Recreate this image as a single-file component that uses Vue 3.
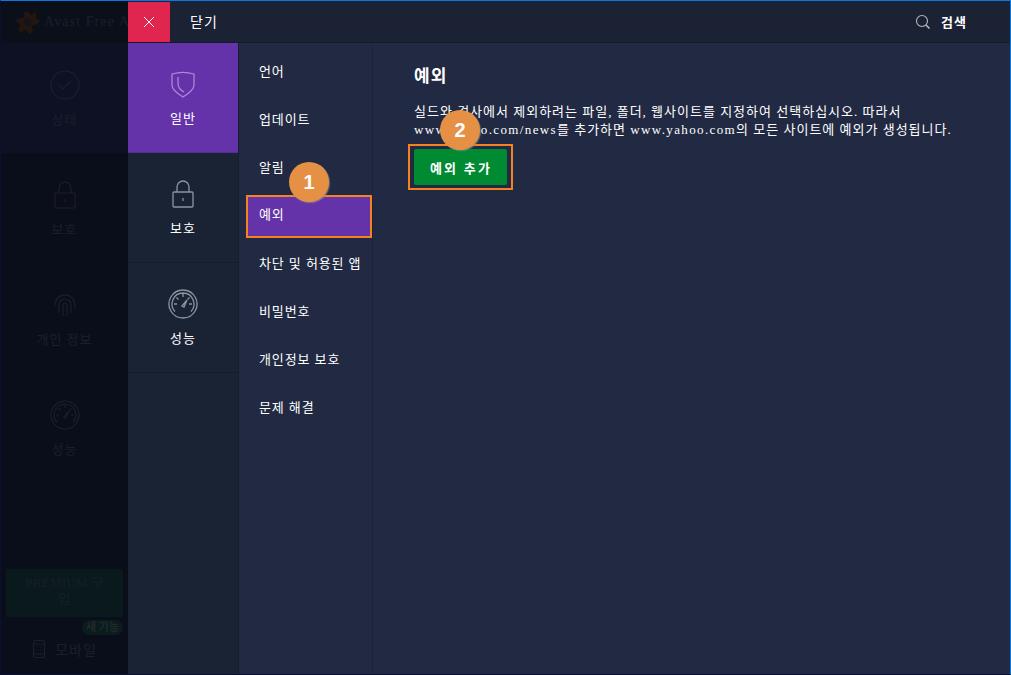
<template>
  <div class="window">
    <!-- dimmed app behind the settings panel -->
    <aside class="back">
      <div class="back-head">
        <svg class="logo" viewBox="0 0 24 24" width="26" height="26">
          <path d="M20 2l-1 6 4 3-2 3-6 1 2 5-4 3-3-4-5 3-2-3 2-5-4-2 1-3 6-1 0-5 4-1 3 4z" fill="#22160f" />
          <circle cx="11.500" cy="12" r="3.500" fill="#14121a" />
        </svg>
        <span class="back-title">Avast Free A</span>
      </div>
      <div v-for="item in backItems" :key="item.label" class="back-item" :class="{ on: item.on }">
        <svg viewBox="0 0 32 32" width="32" height="32" fill="none" stroke="#1c1f2b" stroke-width="1.2">
          <path v-for="d in item.paths" :key="d" :d="d" />
        </svg>
        <span>{{ item.label }}</span>
      </div>
      <div class="back-foot">
        <div class="premium">PREMIUM 구입</div>
        <span class="new-pill">새 기능</span>
        <div class="mobile">
          <svg viewBox="0 0 14 20" width="14" height="20" fill="none" stroke="#1c1f2b" stroke-width="1.2">
            <rect x="1.500" y="1.500" width="11" height="17" rx="2" />
            <path d="M2 5h10M2 15h10M5 8h1M8 8h1M5 11h1M8 11h1" />
          </svg>
          <span>모바일</span>
        </div>
      </div>
    </aside>

    <section class="panel">
      <header class="topbar">
        <button class="close">
          <svg viewBox="0 0 12 12" width="12" height="12" fill="none" stroke="#fff" stroke-width="1">
            <path d="M1 1l10 10M11 1L1 11" />
          </svg>
        </button>
        <span class="close-label">닫기</span>
        <div class="search">
          <svg viewBox="0 0 16 16" width="16" height="16" fill="none" stroke="#b4b8c2" stroke-width="1.1">
            <circle cx="7" cy="7" r="5.500" />
            <path d="M11 11l3.500 3.500" stroke-width="1.600" />
          </svg>
          <b>검색</b>
        </div>
      </header>

      <div class="body">
        <nav class="cats">
          <div v-for="c in cats" :key="c.label" class="cat" :class="{ active: c.active }">
            <svg viewBox="0 0 32 32" width="32" height="32" fill="none" :stroke="c.active ? '#a78ad4' : '#8d93a1'" stroke-width="1.300">
              <path v-for="d in c.paths" :key="d" :d="d" />
            </svg>
            <span>{{ c.label }}</span>
          </div>
        </nav>

        <ul class="subnav">
          <li v-for="s in subItems" :key="s" :class="{ selected: s === '예외' }">{{ s }}</li>
        </ul>

        <main class="content">
          <h2>예외</h2>
          <p>
            실드와 검사에서 제외하려는 파일, 폴더, 웹사이트를 지정하여 선택하십시오. 따라서<br />
            <span class="url">www.yahoo.com/news</span>를 추가하면 <span class="url">www.yahoo.com</span>의 모든 사이트에 예외가 생성됩니다.
          </p>
          <div class="add-box">
            <button class="add">예외 추가</button>
          </div>
        </main>
      </div>
    </section>

    <div class="marker one">1</div>
    <div class="marker two">2</div>
  </div>
</template>

<script setup>
const gauge = [
  'M16 2a14 14 0 1 0 .01 0z',
  'M16 5a11 11 0 0 0-8 18.500M16 5a11 11 0 0 1 8 18.500',
  'M15 18l5-6-3 7z',
  'M16 6v3M7 16h3M25 16h-3M9.500 9.500l2 2M22.500 9.500l-2 2'
]
const lock = [
  'M7 14h18a1 1 0 0 1 1 1v13a1 1 0 0 1-1 1H7a1 1 0 0 1-1-1V15a1 1 0 0 1 1-1z',
  'M10 14V9a6 6 0 0 1 12 0v5',
  'M16 20v3'
]
const shield = [
  'M5 6c7-2 15-2 22 0v11c0 5-6 9-11 12-5-3-11-7-11-12z',
  'M11 9v6c0 4 2 7 6 9'
]

const backItems = [
  { label: '상태', on: true, paths: ['M16 2a14 14 0 1 0 .01 0z', 'M10 16l4 4 8-8'] },
  { label: '보호', paths: lock },
  {
    label: '개인 정보',
    paths: [
      'M8 10a10 10 0 0 1 16 0',
      'M6 16a10 10 0 0 1 20 0v4',
      'M10 24v-8a6 6 0 0 1 12 0v8',
      'M14 27V16a2 2 0 0 1 4 0v11'
    ]
  },
  { label: '성능', paths: gauge }
]

const cats = [
  { label: '일반', active: true, paths: shield },
  { label: '보호', paths: lock },
  { label: '성능', paths: gauge }
]

const subItems = ['언어', '업데이트', '알림', '예외', '차단 및 허용된 앱', '비밀번호', '개인정보 보호', '문제 해결']
</script>

<style>
html,
body {
  margin: 0;
  background: #0b0f1d;
}
</style>

<style scoped>
.window {
  position: relative;
  box-sizing: border-box;
  display: flex;
  width: 1011px;
  height: 675px;
  overflow: hidden;
  border: 1px solid #0b1030;
  border-top: 1px solid #0a78e0;
  border-right-color: #0a78e0;
  font-family: "Liberation Serif", "Noto Sans CJK KR", serif;
  font-size: 13px;
  color: #fff;
}

/* dimmed background app */
.back {
  display: flex;
  flex-direction: column;
  flex: 0 0 127px;
  width: 127px;
  min-width: 0;
  overflow: hidden;
  background: #0a0e1b;
  color: #1c1f2b;
}
.back-head {
  display: flex;
  align-items: center;
  gap: 3px;
  height: 42px;
  padding-left: 14px;
  background: #0a0f1a;
  white-space: nowrap;
  font-size: 14px;
  letter-spacing: 1.100px;
}
.logo {
  flex: none;
}
.back-item {
  display: flex;
  flex-direction: column;
  align-items: center;
  gap: 8px;
  height: 110px;
  padding-top: 26px;
  box-sizing: border-box;
  letter-spacing: 1px;
}
.back-item.on {
  background: #0e1024;
}
.back-foot {
  position: relative;
  margin-top: auto;
  padding: 0 5px 15px;
}
.premium {
  box-sizing: border-box;
  height: 48px;
  padding: 6px 16px 0;
  background: #0a1a1c;
  color: #191e26;
  text-align: center;
  font-size: 13px;
  letter-spacing: 0.3px;
  line-height: 16px;
}
.new-pill {
  position: absolute;
  right: 5px;
  top: 51px;
  padding: 0 4px;
  border-radius: 8px;
  background: #0a1c1c;
  color: #202a2a;
  font-size: 11px;
  line-height: 15px;
  font-weight: 700;
}
.mobile {
  display: flex;
  justify-content: center;
  align-items: center;
  gap: 9px;
  margin-top: 22px;
  font-size: 14px;
  letter-spacing: 1px;
}

/* settings panel */
.panel {
  position: relative;
  display: flex;
  flex-direction: column;
  flex: 1;
  min-width: 0;
  background: #222a43;
}
.topbar {
  display: flex;
  align-items: center;
  height: 42px;
  padding-top: 1px;
  box-sizing: border-box;
  background: #1a2233;
  border-bottom: 1px solid #141b29;
}
.close {
  display: flex;
  justify-content: center;
  align-items: center;
  width: 42px;
  height: 40px;
  padding: 0;
  border: 0;
  background: #e0264f;
}
.close-label {
  margin-left: 20px;
  margin-top: -2px;
  font-size: 14px;
  letter-spacing: 1px;
}
.search {
  display: flex;
  align-items: center;
  gap: 10px;
  margin-left: auto;
  margin-right: 43px;
}
.search b {
  font-size: 13px;
  letter-spacing: 1px;
  margin-top: -2px;
}

.body {
  display: flex;
  flex: 1;
  min-height: 0;
}
.cats {
  flex: 0 0 110px;
  background: #1a2334;
  border-right: 1px solid #171e2e;
}
.cat {
  box-sizing: border-box;
  display: flex;
  flex-direction: column;
  align-items: center;
  gap: 8px;
  height: 110px;
  padding-top: 25px;
  border-bottom: 1px solid #151c2b;
  letter-spacing: 1px;
}
.cat.active {
  background: #6533a9;
  border-bottom-color: #52308f;
}

.subnav {
  flex: 0 0 134px;
  box-sizing: border-box;
  margin: 0;
  padding: 5px 0 0;
  list-style: none;
  border-right: 1px solid #1d2438;
}
.subnav li {
  box-sizing: border-box;
  height: 48px;
  padding-left: 20px;
  line-height: 48px;
  white-space: nowrap;
  letter-spacing: 0.9px;
}
.subnav li.selected {
  height: 43px;
  margin: 3px 0 2px 7px;
  padding-left: 11px;
  line-height: 36px;
  background: #6533a9;
  border: 2px solid #f58220;
}

.content {
  flex: 1;
  padding: 22px 0 0 41px;
}
.content h2 {
  margin: 0;
  font-size: 17px;
  line-height: 24px;
  font-weight: 700;
  letter-spacing: 1px;
}
.content p {
  margin: 14px 0 0;
  line-height: 18px;
  white-space: nowrap;
  letter-spacing: 1px;
}
.url {
  letter-spacing: 1.370px;
}
.add-box {
  box-sizing: border-box;
  width: 105px;
  height: 46px;
  margin: 5px 0 0 -6px;
  padding: 3px 4px;
  border: 2px solid #f58220;
}
.add {
  display: block;
  width: 93px;
  height: 36px;
  padding: 0 0 0 1px;
  border: 0;
  border-radius: 2px;
  background: #008a32;
  color: #fff;
  font: inherit;
  font-weight: 700;
  letter-spacing: 2.200px;
}

/* numbered callouts */
.marker {
  position: absolute;
  width: 40px;
  height: 40px;
  border-radius: 50%;
  background: #e59045;
  box-shadow: 1px 1px 1px rgba(140, 140, 140, 0.7);
  text-align: center;
  font-family: "Liberation Sans", sans-serif;
  font-size: 20px;
  font-weight: 700;
  line-height: 40px;
}
.one {
  left: 288px;
  top: 161px;
}
.two {
  left: 439px;
  top: 109px;
}
</style>
